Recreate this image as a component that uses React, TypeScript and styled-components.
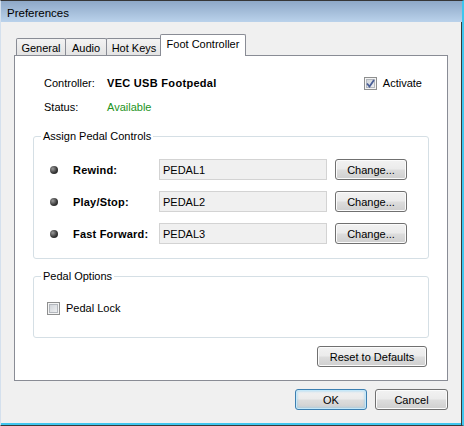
import React from "react";
import styled, { createGlobalStyle } from "styled-components";

const Global = createGlobalStyle`
  html, body { margin: 0; padding: 0; background: #f0f0f0; }
  body { font-family: "Liberation Sans", Arial, sans-serif; font-size: 11px; color: #000; }
`;

const Window = styled.div`
  box-sizing: border-box;
  width: 464px;
  height: 426px;
  display: flex;
  flex-direction: column;
  background: #f0f0f0;
  border-top: 1px solid #363636;
  border-left: 1px solid #d4e0ed;
  border-right: 2px solid #3fc6ee;
  border-bottom: 1px solid #383838;
  box-shadow: inset -1px 0 0 #383838, inset 0 -2px 0 #3fc6ee;
`;

const TitleBar = styled.div`
  height: 21px;
  box-sizing: border-box;
  padding: 6px 0 0 6px;
  font-size: 11.5px;
  line-height: 13px;
  background: linear-gradient(#8ea8c7, #bad2eb);
`;

const Content = styled.div`
  display: flex;
  flex-direction: column;
  padding: 12px 14px 0 13px;
`;

const TabRow = styled.div`
  display: flex;
  align-items: flex-start;
  height: 22px;
  padding-left: 2px;
  margin-bottom: -1px;
  position: relative;
  z-index: 1;
`;

const Tab = styled.div<{ $active?: boolean; $w: number }>`
  box-sizing: border-box;
  width: ${(p) => p.$w}px;
  border: 1px solid #898c95;
  border-bottom: none;
  border-radius: 2px 2px 0 0;
  font-size: 11px;
  display: flex;
  align-items: center;
  justify-content: center;
  ${(p) =>
    p.$active
      ? `
    height: 22px;
    margin: 0 -2px 0 -1px;
    padding-bottom: 3px;
    background: #fff;
    position: relative;
    z-index: 2;
  `
      : `
    height: 17px;
    margin-top: 4px;
    margin-right: -1px;
    padding-top: 1px;
    background: linear-gradient(#f3f3f3, #e3e3e3);
  `}
`;

const Panel = styled.div`
  box-sizing: border-box;
  height: 326px;
  background: #fff;
  border: 1px solid #898c95;
  padding: 0 18px;
  display: flex;
  flex-direction: column;
`;

const InfoRow = styled.div<{ $first?: boolean }>`
  display: flex;
  align-items: center;
  height: 14px;
  margin-top: ${(p) => (p.$first ? 20 : 10)}px;
  padding: 0 7px 0 11px;
`;

const InfoLabel = styled.span`
  width: 63px;
  flex: none;
`;

const InfoValue = styled.span<{ $tone?: "bold" | "ok" }>`
  flex: 1;
  ${(p) => (p.$tone === "bold" ? "font-weight: bold; letter-spacing: 0.3px;" : "")}
  ${(p) => (p.$tone === "ok" ? "color: #239423;" : "")}
`;

const CheckLabel = styled.label`
  display: flex;
  align-items: center;
  gap: 6px;
`;

const CheckBox = styled.span`
  box-sizing: border-box;
  width: 13px;
  height: 13px;
  border: 1px solid #8e8f8f;
  background: linear-gradient(135deg, #c9cdd3, #f5f6f7);
  box-shadow: inset 0 0 0 1px #f4f4f4, inset 0 0 0 2px #b3b7bd;
  display: flex;
  align-items: center;
  justify-content: center;
`;

const Group = styled.fieldset<{ $gap: number }>`
  margin: ${(p) => p.$gap}px 0 0 0;
  padding: 0;
  min-width: 0;
  border: 1px solid #d5dfe5;
  border-radius: 3px;
`;

const Legend = styled.legend`
  margin-left: 7px;
  padding: 0 2px;
  font-size: 11px;
  line-height: 13px;
`;

const Rows = styled.div`
  display: flex;
  flex-direction: column;
  gap: 11px;
  padding: 16px 0 14px 16px;
`;

const PedalRow = styled.div`
  display: flex;
  align-items: center;
  height: 21px;
`;

const Bullet = styled.span`
  width: 8px;
  height: 8px;
  border-radius: 50%;
  background: radial-gradient(circle at 35% 35%, #9a9a9a, #333 60%, #1a1a1a);
  flex: none;
`;

const PedalLabel = styled.span`
  font-weight: bold;
  letter-spacing: 0.2px;
  width: 86px;
  margin-left: 15px;
  flex: none;
`;

const Field = styled.div`
  box-sizing: border-box;
  width: 168px;
  height: 21px;
  border: 1px solid #d3d3d3;
  background: #f0f0f0;
  padding-left: 3px;
  display: flex;
  align-items: center;
`;

const Button = styled.button<{ $w: number; $default?: boolean }>`
  box-sizing: border-box;
  width: ${(p) => p.$w}px;
  height: 21px;
  padding: 0;
  font-family: "Liberation Sans", Arial, sans-serif;
  font-size: 11px;
  color: #000;
  border-radius: 3px;
  border: 1px solid ${(p) => (p.$default ? "#3c7fb1" : "#707070")};
  background: linear-gradient(#f2f2f2 0%, #ebebeb 48%, #dddddd 52%, #cfcfcf 100%);
  box-shadow: ${(p) =>
    p.$default
      ? "inset 0 0 0 1px #c5e8f9, inset 0 0 2px 2px rgba(120,200,240,0.35)"
      : "inset 0 0 0 1px #fbfbfb"};
`;

const ChangeButton = styled(Button)`
  margin-left: 8px;
`;

const OptionRow = styled.div`
  padding: 18px 0 22px 13px;
  height: 14px;
  display: flex;
  align-items: center;
`;

const ResetRow = styled.div`
  display: flex;
  justify-content: flex-end;
  margin-top: 8px;
  padding-right: 2px;
`;

const Footer = styled.div`
  display: flex;
  justify-content: flex-end;
  gap: 8px;
  margin-top: 8px;
`;

const Check = () => (
  <svg width="9" height="9" viewBox="0 0 9 9">
    <path d="M1 4.5 L3.5 7.5 L8 1" fill="none" stroke="#4a5f97" strokeWidth="1.8" />
  </svg>
);

const tabs = [
  { label: "General", w: 50 },
  { label: "Audio", w: 42 },
  { label: "Hot Keys", w: 56 },
  { label: "Foot Controller", w: 86, active: true },
];

const pedals = [
  { name: "Rewind:", value: "PEDAL1" },
  { name: "Play/Stop:", value: "PEDAL2" },
  { name: "Fast Forward:", value: "PEDAL3" },
];

export default function App() {
  return (
    <>
      <Global />
      <Window>
        <TitleBar>Preferences</TitleBar>
        <Content>
          <TabRow>
            {tabs.map((t) => (
              <Tab key={t.label} $w={t.w} $active={t.active}>
                {t.label}
              </Tab>
            ))}
          </TabRow>
          <Panel>
            <InfoRow $first>
              <InfoLabel>Controller:</InfoLabel>
              <InfoValue $tone="bold">VEC USB Footpedal</InfoValue>
              <CheckLabel>
                <CheckBox>
                  <Check />
                </CheckBox>
                Activate
              </CheckLabel>
            </InfoRow>
            <InfoRow>
              <InfoLabel>Status:</InfoLabel>
              <InfoValue $tone="ok">Available</InfoValue>
            </InfoRow>
            <Group $gap={16}>
              <Legend>Assign Pedal Controls</Legend>
              <Rows>
                {pedals.map((p) => (
                  <PedalRow key={p.value}>
                    <Bullet />
                    <PedalLabel>{p.name}</PedalLabel>
                    <Field>{p.value}</Field>
                    <ChangeButton $w={72}>Change...</ChangeButton>
                  </PedalRow>
                ))}
              </Rows>
            </Group>
            <Group $gap={11}>
              <Legend>Pedal Options</Legend>
              <OptionRow>
                <CheckLabel>
                  <CheckBox />
                  Pedal Lock
                </CheckLabel>
              </OptionRow>
            </Group>
            <ResetRow>
              <Button $w={110}>Reset to Defaults</Button>
            </ResetRow>
          </Panel>
          <Footer>
            <Button $w={72} $default>
              OK
            </Button>
            <Button $w={73}>Cancel</Button>
          </Footer>
        </Content>
      </Window>
    </>
  );
}
